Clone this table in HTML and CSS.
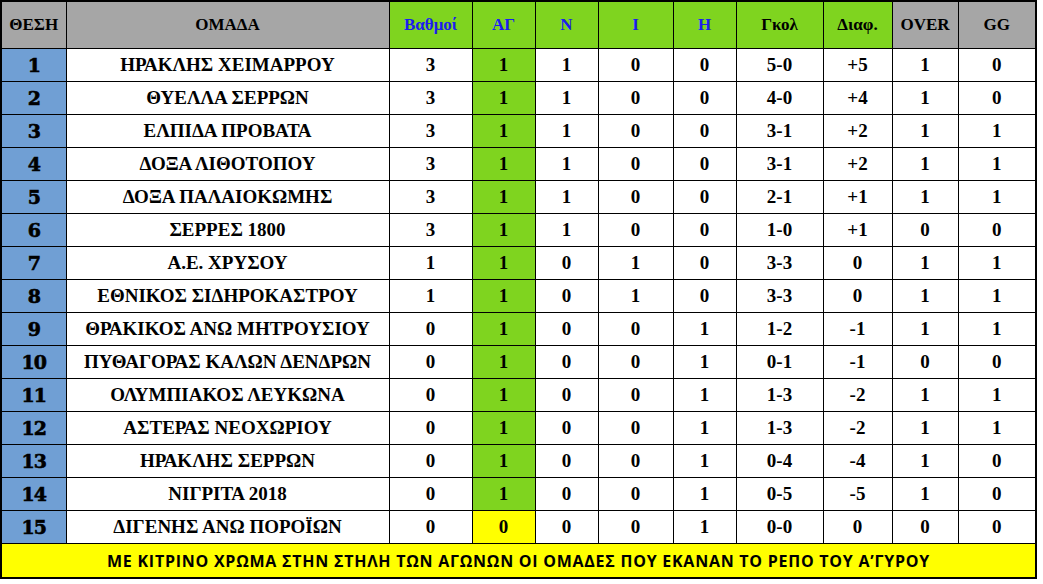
FILE: index.html
```html
<!DOCTYPE html>
<html lang="el">
<head>
<meta charset="utf-8">
<title>Βαθμολογία</title>
<link rel="stylesheet" href="styles.css">
</head>
<body>
<table class="standings">
  <colgroup>
    <col class="c-pos"><col class="c-team"><col class="c-pts"><col class="c-ag"><col class="c-n"><col class="c-i"><col class="c-h"><col class="c-goal"><col class="c-diff"><col class="c-over"><col class="c-gg">
  </colgroup>
  <thead>
    <tr>
      <th class="grey">ΘΕΣΗ</th>
      <th class="grey">ΟΜΑΔΑ</th>
      <th class="green blue">Βαθμοί</th>
      <th class="green blue">ΑΓ</th>
      <th class="green blue">Ν</th>
      <th class="green blue">Ι</th>
      <th class="green blue">Η</th>
      <th class="green">Γκολ</th>
      <th class="green">Διαφ.</th>
      <th class="grey">OVER</th>
      <th class="grey">GG</th>
    </tr>
  </thead>
  <tbody>
    <tr><td class="pos">1</td><td>ΗΡΑΚΛΗΣ ΧΕΙΜΑΡΡΟΥ</td><td>3</td><td class="ag">1</td><td>1</td><td>0</td><td>0</td><td>5-0</td><td>+5</td><td>1</td><td>0</td></tr>
    <tr><td class="pos">2</td><td>ΘΥΕΛΛΑ ΣΕΡΡΩΝ</td><td>3</td><td class="ag">1</td><td>1</td><td>0</td><td>0</td><td>4-0</td><td>+4</td><td>1</td><td>0</td></tr>
    <tr><td class="pos">3</td><td>ΕΛΠΙΔΑ ΠΡΟΒΑΤΑ</td><td>3</td><td class="ag">1</td><td>1</td><td>0</td><td>0</td><td>3-1</td><td>+2</td><td>1</td><td>1</td></tr>
    <tr><td class="pos">4</td><td>ΔΟΞΑ ΛΙΘΟΤΟΠΟΥ</td><td>3</td><td class="ag">1</td><td>1</td><td>0</td><td>0</td><td>3-1</td><td>+2</td><td>1</td><td>1</td></tr>
    <tr><td class="pos">5</td><td>ΔΟΞΑ ΠΑΛΑΙΟΚΩΜΗΣ</td><td>3</td><td class="ag">1</td><td>1</td><td>0</td><td>0</td><td>2-1</td><td>+1</td><td>1</td><td>1</td></tr>
    <tr><td class="pos">6</td><td>ΣΕΡΡΕΣ 1800</td><td>3</td><td class="ag">1</td><td>1</td><td>0</td><td>0</td><td>1-0</td><td>+1</td><td>0</td><td>0</td></tr>
    <tr><td class="pos">7</td><td>Α.Ε. ΧΡΥΣΟΥ</td><td>1</td><td class="ag">1</td><td>0</td><td>1</td><td>0</td><td>3-3</td><td>0</td><td>1</td><td>1</td></tr>
    <tr><td class="pos">8</td><td>ΕΘΝΙΚΟΣ ΣΙΔΗΡΟΚΑΣΤΡΟΥ</td><td>1</td><td class="ag">1</td><td>0</td><td>1</td><td>0</td><td>3-3</td><td>0</td><td>1</td><td>1</td></tr>
    <tr><td class="pos">9</td><td>ΘΡΑΚΙΚΟΣ ΑΝΩ ΜΗΤΡΟΥΣΙΟΥ</td><td>0</td><td class="ag">1</td><td>0</td><td>0</td><td>1</td><td>1-2</td><td>-1</td><td>1</td><td>1</td></tr>
    <tr><td class="pos">10</td><td>ΠΥΘΑΓΟΡΑΣ ΚΑΛΩΝ ΔΕΝΔΡΩΝ</td><td>0</td><td class="ag">1</td><td>0</td><td>0</td><td>1</td><td>0-1</td><td>-1</td><td>0</td><td>0</td></tr>
    <tr><td class="pos">11</td><td>ΟΛΥΜΠΙΑΚΟΣ ΛΕΥΚΩΝΑ</td><td>0</td><td class="ag">1</td><td>0</td><td>0</td><td>1</td><td>1-3</td><td>-2</td><td>1</td><td>1</td></tr>
    <tr><td class="pos">12</td><td>ΑΣΤΕΡΑΣ ΝΕΟΧΩΡΙΟΥ</td><td>0</td><td class="ag">1</td><td>0</td><td>0</td><td>1</td><td>1-3</td><td>-2</td><td>1</td><td>1</td></tr>
    <tr><td class="pos">13</td><td>ΗΡΑΚΛΗΣ ΣΕΡΡΩΝ</td><td>0</td><td class="ag">1</td><td>0</td><td>0</td><td>1</td><td>0-4</td><td>-4</td><td>1</td><td>0</td></tr>
    <tr><td class="pos">14</td><td>ΝΙΓΡΙΤΑ 2018</td><td>0</td><td class="ag">1</td><td>0</td><td>0</td><td>1</td><td>0-5</td><td>-5</td><td>1</td><td>0</td></tr>
    <tr><td class="pos">15</td><td>ΔΙΓΕΝΗΣ ΑΝΩ ΠΟΡΟΪΩΝ</td><td>0</td><td class="repo">0</td><td>0</td><td>0</td><td>1</td><td>0-0</td><td>0</td><td>0</td><td>0</td></tr>
  </tbody>
  <tfoot>
    <tr><td class="note" colspan="11">ΜΕ ΚΙΤΡΙΝΟ ΧΡΩΜΑ ΣΤΗΝ ΣΤΗΛΗ ΤΩΝ ΑΓΩΝΩΝ ΟΙ ΟΜΑΔΕΣ ΠΟΥ ΕΚΑΝΑΝ ΤΟ ΡΕΠΟ ΤΟΥ Α’ΓΥΡΟΥ</td></tr>
  </tfoot>
</table>
</body>
</html>
```

FILE: styles.css
```css
html, body {
  margin: 0;
  padding: 0;
  background: #ffffff;
}

.standings {
  border-collapse: collapse;
  table-layout: fixed;
  width: 1037px;
  border: 2px solid #000;
  font-family: "Liberation Serif", "DejaVu Serif", serif;
  font-weight: bold;
  color: #000;
}

.c-pos { width: 65px; }
.c-team { width: 323px; }
.c-pts { width: 83px; }
.c-ag { width: 63px; }
.c-n { width: 63px; }
.c-i { width: 75px; }
.c-h { width: 63px; }
.c-goal { width: 87px; }
.c-diff { width: 69px; }
.c-over { width: 66px; }
.c-gg { width: 78px; }

.standings th,
.standings td {
  border: 1px solid #000;
  padding: 0;
  text-align: center;
  vertical-align: middle;
  white-space: nowrap;
  overflow: hidden;
}

.standings th {
  height: 46px;
  font-size: 17px;
}

.standings td {
  height: 32px;
  font-size: 19px;
}

.grey { background: #a6a6a6; }
.green { background: #7fd41f; }
.blue { color: #1c1cf0; }

.pos {
  background: #709fd4;
  font-family: "DejaVu Serif", serif;
  font-size: 20px;
  -webkit-text-stroke: 0.6px #000;
  letter-spacing: -1px;
}

.ag { background: #7fd41f; }
.repo { background: #ffff00; }

.standings td.note {
  height: 33px;
  background: #ffff00;
  font-family: "Open Sans", "Noto Sans", sans-serif;
  font-size: 16px;
  font-weight: 700;
  letter-spacing: 0.75px;
}
```
